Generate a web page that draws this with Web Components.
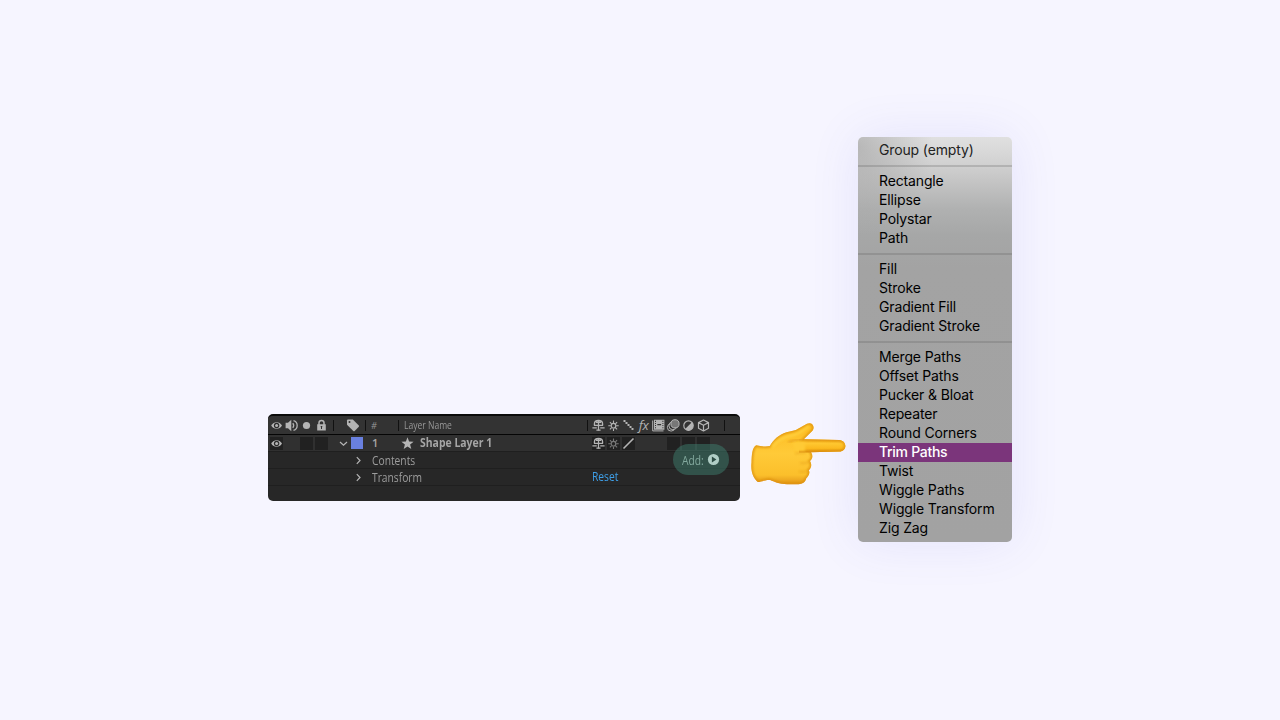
<!DOCTYPE html>
<html lang="en">
<head>
<meta charset="utf-8">
<title>Trim Paths</title>
<style>
    body {
        margin: 0;
        width: 1280px;
        height: 720px;
        overflow: hidden;
        background: #f6f5ff;
    }
</style>
</head>
<body>
<ae-stage>
    <layer-panel slot="panel"></layer-panel>
    <pointing-hand slot="hand"></pointing-hand>
    <shape-menu slot="menu">
        <menu-group>
            <menu-item>Group (empty)</menu-item>
        </menu-group>
        <menu-group>
            <menu-item>Rectangle</menu-item>
            <menu-item>Ellipse</menu-item>
            <menu-item>Polystar</menu-item>
            <menu-item>Path</menu-item>
        </menu-group>
        <menu-group>
            <menu-item>Fill</menu-item>
            <menu-item>Stroke</menu-item>
            <menu-item>Gradient Fill</menu-item>
            <menu-item>Gradient Stroke</menu-item>
        </menu-group>
        <menu-group>
            <menu-item>Merge Paths</menu-item>
            <menu-item>Offset Paths</menu-item>
            <menu-item>Pucker &amp; Bloat</menu-item>
            <menu-item>Repeater</menu-item>
            <menu-item>Round Corners</menu-item>
            <menu-item selected>Trim Paths</menu-item>
            <menu-item>Twist</menu-item>
            <menu-item>Wiggle Paths</menu-item>
            <menu-item>Wiggle Transform</menu-item>
            <menu-item>Zig Zag</menu-item>
        </menu-group>
    </shape-menu>
</ae-stage>

<script>
class AeStage extends HTMLElement {
    constructor() {
        super();
        this.attachShadow({ mode: 'open' });
        this.shadowRoot.innerHTML = `
            <style>
                :host {
                    display: grid;
                    grid-template-columns: 472px 118px 154px;
                    justify-content: center;
                    align-items: start;
                    height: 720px;
                }
                .panel { padding-top: 414px; }
                .hand { padding: 419px 0 0 8px; z-index: 1; }
                .menu { padding-top: 137px; }
            </style>
            <div class="panel"><slot name="panel"></slot></div>
            <div class="hand"><slot name="hand"></slot></div>
            <div class="menu"><slot name="menu"></slot></div>
        `;
    }
}

// 15x15 icons used in the panel columns
const ICONS = {
    eye: `<path d="M2.2 7.5C4.6 3 10.6 3 13 7.5C10.6 11.9 4.6 11.9 2.2 7.5Z" fill="currentColor"/><circle cx="7.6" cy="7.5" r="2.7" fill="#2b2b2b"/><circle cx="7.6" cy="7.5" r="1.5" fill="currentColor"/>`,
    speaker: `<path d="M1.6 4.8H4L7.3 1.8V13.2L4 10.2H1.6Z" fill="currentColor"/><path d="M8.8 5.2Q10.6 7.5 8.8 9.8M9.5 2.6C14.4 4 14.4 11 9.5 12.4" fill="none" stroke="currentColor" stroke-width="1.3"/>`,
    solo: `<circle cx="7.5" cy="7.5" r="3.6" fill="currentColor"/>`,
    lock: `<path d="M5 7V4.7C5 1.6 10 1.6 10 4.7V7" fill="none" stroke="currentColor" stroke-width="1.5"/><path d="M3.2 6.3H11.8V12.6H3.2Z" fill="currentColor"/><path d="M7.5 8V11M6.7 8.6H8.3" stroke="#333" stroke-width="1"/>`,
    tag: `<path d="M2 2.4Q2 1.5 3 1.5H7.8L13.8 7.6Q14.3 8.2 13.8 8.8L9.7 12.9Q9 13.5 8.3 12.9L2 6.8Z" fill="currentColor"/><circle cx="4.5" cy="4" r="1" fill="#333"/>`,
    shy: `<path d="M3.4 7.6V6C3.4 1.3 11.6 1.3 11.6 6V7.6M3 7.4H12M7.5 3V12.4M5 4.3H10" fill="none" stroke="currentColor" stroke-width="1.3"/><path d="M1.4 9.8H5.8M9.2 9.8H13.6M5.4 12.2H9.6" stroke="currentColor" stroke-width="1.3"/>`,
    sun: `<circle cx="7.5" cy="7.7" r="2.3" fill="none" stroke="currentColor" stroke-width="1.2"/><path d="M7.5 2.5V5M7.5 10.4V12.9M2.3 7.7H4.8M10.2 7.7H12.7M3.9 4.1L5.6 5.8M11.1 4.1L9.4 5.8M3.9 11.3L5.6 9.6M11.1 11.3L9.4 9.6" stroke="currentColor" stroke-width="1.1"/>`,
    steps: `<path d="M2.5 2H4.5V4H2.5ZM4.5 4H6.5V6H4.5ZM6.5 6H8.5V8H6.5ZM8.5 8H10.5V10H8.5ZM10.5 10H12.5V12H10.5Z" fill="currentColor"/>`,
    slash: `<path d="M2.5 12.5L12.5 2.5" stroke="currentColor" stroke-width="1.6"/>`,
    film: `<path d="M1.7 2.5V12.9H12.5" fill="none" stroke="currentColor" stroke-width="1"/><path d="M3 1.7H13.4V11.7H3Z" fill="currentColor"/><path d="M4 2.8H5V3.9H4ZM4 4.9H5V6H4ZM4 7H5V8.1H4ZM4 9.2H5V10.3H4ZM11.4 2.8H12.4V3.9H11.4ZM11.4 4.9H12.4V6H11.4ZM11.4 7H12.4V8.1H11.4ZM11.4 9.2H12.4V10.3H11.4ZM6.3 6.1H10.1V7.3H6.3Z" fill="#333"/>`,
    blur: `<g stroke="currentColor" stroke-width="1"><circle cx="5.1" cy="9.4" r="3.7" fill="#333"/><circle cx="6.8" cy="7.8" r="3.9" fill="#333"/><circle cx="9" cy="5.8" r="4.1" fill="#777"/></g>`,
    adjust: `<circle cx="7.5" cy="7.6" r="4.7" fill="#333" stroke="currentColor" stroke-width="1.2"/><path d="M10.9 4.2A4.8 4.8 0 0 1 4.1 11Z" fill="currentColor"/>`,
    cube: `<path d="M7.5 2L12.5 4.6V10.3L7.5 13L2.5 10.3V4.6ZM2.5 4.6L7.5 7.2L12.5 4.6M7.5 7.2V13" fill="none" stroke="currentColor" stroke-width="1.2" stroke-linejoin="round"/>`,
    star: `<path d="M7.5 1.3L9.1 5.6L13.6 5.8L10.1 8.6L11.3 13L7.5 10.5L3.7 13L4.9 8.6L1.4 5.8L5.9 5.6Z" fill="currentColor"/>`,
    down: `<path d="M4 6L7.5 9.3L11 6" fill="none" stroke="currentColor" stroke-width="1.2"/>`,
    right: `<path d="M5.8 4.2L9 7.5L5.8 10.8" fill="none" stroke="currentColor" stroke-width="1.2"/>`,
    play: `<circle cx="7.5" cy="7.5" r="5.6" fill="currentColor"/><path d="M5.9 4.4L10.4 7.5L5.9 10.6Z" fill="#2c4b43"/>`
};

class PanelIcon extends HTMLElement {
    connectedCallback() {
        if (!this.shadowRoot) {
            this.attachShadow({ mode: 'open' });
        }
        const name = this.getAttribute('name');
        this.shadowRoot.innerHTML = `
            <style>
                :host {
                    display: flex;
                    flex: none;
                    align-items: center;
                    justify-content: center;
                    width: 15px;
                    height: 15px;
                }
                .box {
                    display: flex;
                    align-items: center;
                    justify-content: center;
                    width: 15px;
                    height: 15px;
                }
                :host([boxed]) .box {
                    width: 13px;
                    height: 13px;
                    background: #212121;
                }
                svg { display: block; flex: none; }
            </style>
            <div class="box">${name ? `<svg width="15" height="15" viewBox="0 0 15 15">${ICONS[name]}</svg>` : ''}</div>
        `;
    }
}

class LayerPanel extends HTMLElement {
    constructor() {
        super();
        this.attachShadow({ mode: 'open' });
        this.shadowRoot.innerHTML = `
            <style>
                :host {
                    display: block;
                    position: relative;
                    box-sizing: border-box;
                    width: 472px;
                    height: 87px;
                    border-top: 2px solid #0b0b0b;
                    border-radius: 5px;
                    overflow: hidden;
                    background: #272727;
                    color: #b4b4b4;
                    font: 500 12px/16px "Open Sans", "Noto Sans", sans-serif;
                }
                .row {
                    display: flex;
                    align-items: center;
                    box-sizing: border-box;
                    height: 17px;
                    border-bottom: 1px solid #1f1f1f;
                    padding-left: 1px;
                    white-space: nowrap;
                    color: #9d9d9d;
                }
                .head {
                    height: 19px;
                    background: #333;
                    border-bottom: 1px solid #050505;
                    font-size: 10px;
                    color: #989898;
                }
                .layer { background: #303030; color: #a5a5a5; }
                panel-icon { color: #b4b4b4; }
                panel-icon[dim] { color: #777; }
                .sep {
                    flex: none;
                    width: 1px;
                    height: 11px;
                    background: #111;
                }
                /* the panel font runs narrower than Open Sans */
                .name, .title, .prop, .reset, .add span {
                    transform: scaleX(0.855);
                    transform-origin: 0 50%;
                }
                .num { width: 24px; margin-left: 5px; font-size: 9px; font-style: italic; line-height: 18px; padding-top: 1px; }
                .name { width: 183px; margin-left: 5px; }
                .swatch { width: 12px; height: 12px; background: #6980e0; }
                .index { width: 28px; margin-left: 9px; font-size: 11px; font-weight: 600; }
                .title { width: 171px; margin-left: 5px; font-weight: 700; transform: scaleX(0.87); }
                .prop { width: 220px; margin-left: 6px; padding-top: 2px; }
                .fx { width: 15px; text-align: center; font: italic 13px/14px "Open Sans", sans-serif; letter-spacing: -0.5px; padding-bottom: 1px; color: #b4b4b4; }
                .reset { color: #3e9fe8; }
                .add {
                    position: absolute;
                    left: 405px;
                    top: 28px;
                    display: flex;
                    align-items: center;
                    box-sizing: border-box;
                    width: 56px;
                    height: 31px;
                    padding-left: 9px;
                    border-radius: 16px;
                    background: rgba(66, 144, 124, 0.42);
                    color: #83a99e;
                }
                .add span { width: 24px; line-height: 16px; padding-top: 3px; }
                .add panel-icon { color: #b0cdc5; }
            </style>
            <div class="row head">
                <panel-icon name="eye"></panel-icon>
                <panel-icon name="speaker"></panel-icon>
                <panel-icon name="solo"></panel-icon>
                <panel-icon name="lock"></panel-icon>
                <div class="sep" style="margin-left: 4px"></div>
                <panel-icon name="tag" style="margin-left: 11px"></panel-icon>
                <div class="sep" style="margin-left: 5px"></div>
                <div class="num">#</div>
                <div class="sep" style="margin-left: 3px"></div>
                <div class="name">Layer Name</div>
                <div class="sep"></div>
                <panel-icon name="shy" style="margin-left: 3px"></panel-icon>
                <panel-icon name="sun"></panel-icon>
                <panel-icon name="steps"></panel-icon>
                <div class="fx">fx</div>
                <panel-icon name="film"></panel-icon>
                <panel-icon name="blur"></panel-icon>
                <panel-icon name="adjust"></panel-icon>
                <panel-icon name="cube"></panel-icon>
                <div class="sep" style="margin-left: 13px"></div>
            </div>
            <div class="row layer">
                <panel-icon name="eye" boxed></panel-icon>
                <panel-icon></panel-icon>
                <panel-icon boxed></panel-icon>
                <panel-icon boxed></panel-icon>
                <panel-icon name="down" style="margin-left: 7px"></panel-icon>
                <div class="swatch"></div>
                <div class="index">1</div>
                <panel-icon name="star"></panel-icon>
                <div class="title">Shape Layer 1</div>
                <panel-icon name="shy" boxed></panel-icon>
                <panel-icon name="sun" boxed dim></panel-icon>
                <panel-icon name="slash" boxed></panel-icon>
                <panel-icon></panel-icon>
                <panel-icon></panel-icon>
                <panel-icon boxed></panel-icon>
                <panel-icon boxed></panel-icon>
                <panel-icon boxed></panel-icon>
            </div>
            <div class="row">
                <panel-icon name="right" style="margin-left: 82px"></panel-icon>
                <div class="prop">Contents</div>
            </div>
            <div class="row">
                <panel-icon name="right" style="margin-left: 82px"></panel-icon>
                <div class="prop">Transform</div>
                <div class="reset">Reset</div>
            </div>
            <div class="add">
                <span>Add:</span>
                <panel-icon name="play"></panel-icon>
            </div>
        `;
    }
}

class PointingHand extends HTMLElement {
    constructor() {
        super();
        this.attachShadow({ mode: 'open' });
        this.shadowRoot.innerHTML = `
            <style>
                :host { display: block; }
                svg { display: block; }
            </style>
            <svg width="100" height="70" viewBox="0 0 100 70">
                <defs>
                    <linearGradient id="skin" x1="0" y1="0" x2="0" y2="1">
                        <stop offset="0" stop-color="#fdbb20"/>
                        <stop offset=".5" stop-color="#ffca38"/>
                        <stop offset=".85" stop-color="#fbbf2b"/>
                        <stop offset="1" stop-color="#e29618"/>
                    </linearGradient>
                    <linearGradient id="finger" x1="0" y1="0" x2="0" y2="1">
                        <stop offset="0" stop-color="#f0a71b"/>
                        <stop offset=".3" stop-color="#ffc831"/>
                        <stop offset=".7" stop-color="#fbb91f"/>
                        <stop offset="1" stop-color="#d98c0e"/>
                    </linearGradient>
                    <filter id="soft" x="-10%" y="-10%" width="120%" height="120%">
                        <feGaussianBlur stdDeviation="1.1"/>
                    </filter>
                    <clipPath id="shape">
                        <path id="outline" d="M8.2 26.3C13.5 27.5 18.5 27.8 21.8 27C25.5 20.5 31 15.5 38.5 13.2C43 12.3 47.2 11.7 50.5 9.5L59 4.7C64.5 2.4 67.7 8.2 64 12.3L55.8 20.2L91 21.1C99.5 21.8 99.4 32.3 91.2 32.6L63 33.3C65.2 36.2 64.7 40 62 42C64.2 45.2 63.3 49.3 60.8 51.2C62.8 55 59.2 58.2 58.3 59.3C57.2 63.4 54.3 65.2 50.6 65.2H39C31 65.2 26 62.6 22.2 61C17.5 60.5 12.7 63.2 9.8 63C4.5 58.2 2.6 51.5 3.5 43.5C3.7 36 4.2 28.2 8.2 26.3Z"/>
                    </clipPath>
                </defs>
                <use href="#outline" fill="url(#skin)"/>
                <g clip-path="url(#shape)">
                    <path d="M51 20.2H100V33.4H51Z" fill="url(#finger)"/>
                    <path d="M44 24C48 21.5 52 21.3 57 21.8V32H48Z" fill="#ffca35" filter="url(#soft)"/>
                    <use href="#outline" fill="none" stroke="#dd900f" stroke-width="2.8" opacity=".85" filter="url(#soft)"/>
                    <path d="M58 33.5L47 34.6M62 42.5C59 44 55 44.4 52 44M61 51.5C58 53 54 53 51 52.5" fill="none" stroke="#e7a019" stroke-width="1.5" opacity=".6" filter="url(#soft)"/>
                    <path d="M24 28C29 21 36 18 44 16.5C50 15.5 55 11.5 61 7" fill="none" stroke="#ffd140" stroke-width="3" opacity=".8" filter="url(#soft)"/>
                    <path d="M55.5 20.5C48 20.7 44 20.7 40 23.5" fill="none" stroke="#e49b17" stroke-width="1.4" filter="url(#soft)"/>
                </g>
            </svg>
        `;
    }
}

class ShapeMenu extends HTMLElement {
    constructor() {
        super();
        this.attachShadow({ mode: 'open' });
        this.shadowRoot.innerHTML = `
            <style>
                :host {
                    display: block;
                    box-sizing: border-box;
                    width: 154px;
                    height: 405px;
                    padding: 4px 0;
                    border-radius: 5px;
                    background:
                        radial-gradient(ellipse 75px 90px at 0 10px, rgba(155, 155, 155, 0.55), rgba(160, 160, 160, 0)),
                        linear-gradient(#e0e0e0, #d3d3d3 24px, #c4c4c4 45px, #b0b1b1 72px, #a6a7a7 98px, #a3a3a3 130px, #a2a2a2);
                    box-shadow: 0 0 50px rgba(80, 84, 220, 0.11);
                    color: #000;
                    font: 14px/17px Inter, sans-serif;
                    letter-spacing: -0.14px;
                }
            </style>
            <slot></slot>
        `;
    }
}

class MenuGroup extends HTMLElement {
    constructor() {
        super();
        this.attachShadow({ mode: 'open' });
        this.shadowRoot.innerHTML = `
            <style>
                :host { display: block; }
                :host(:first-of-type) { color: #222; }
                .line {
                    height: 2px;
                    margin: 5px 0;
                    background: rgba(90, 90, 90, 0.25);
                }
                :host(:last-of-type) .line { display: none; }
            </style>
            <slot></slot>
            <div class="line"></div>
        `;
    }
}

class MenuItem extends HTMLElement {
    constructor() {
        super();
        this.attachShadow({ mode: 'open' });
        this.shadowRoot.innerHTML = `
            <style>
                :host {
                    display: block;
                    height: 19px;
                    padding-left: 21px;
                    white-space: nowrap;
                }
                :host([selected]) {
                    background: #7b357b;
                    color: #fff;
                    font-weight: 500;
                    letter-spacing: -0.3px;
                }
            </style>
            <slot></slot>
        `;
    }
}

customElements.define('panel-icon', PanelIcon);
customElements.define('layer-panel', LayerPanel);
customElements.define('pointing-hand', PointingHand);
customElements.define('menu-item', MenuItem);
customElements.define('menu-group', MenuGroup);
customElements.define('shape-menu', ShapeMenu);
customElements.define('ae-stage', AeStage);
</script>
</body>
</html>
